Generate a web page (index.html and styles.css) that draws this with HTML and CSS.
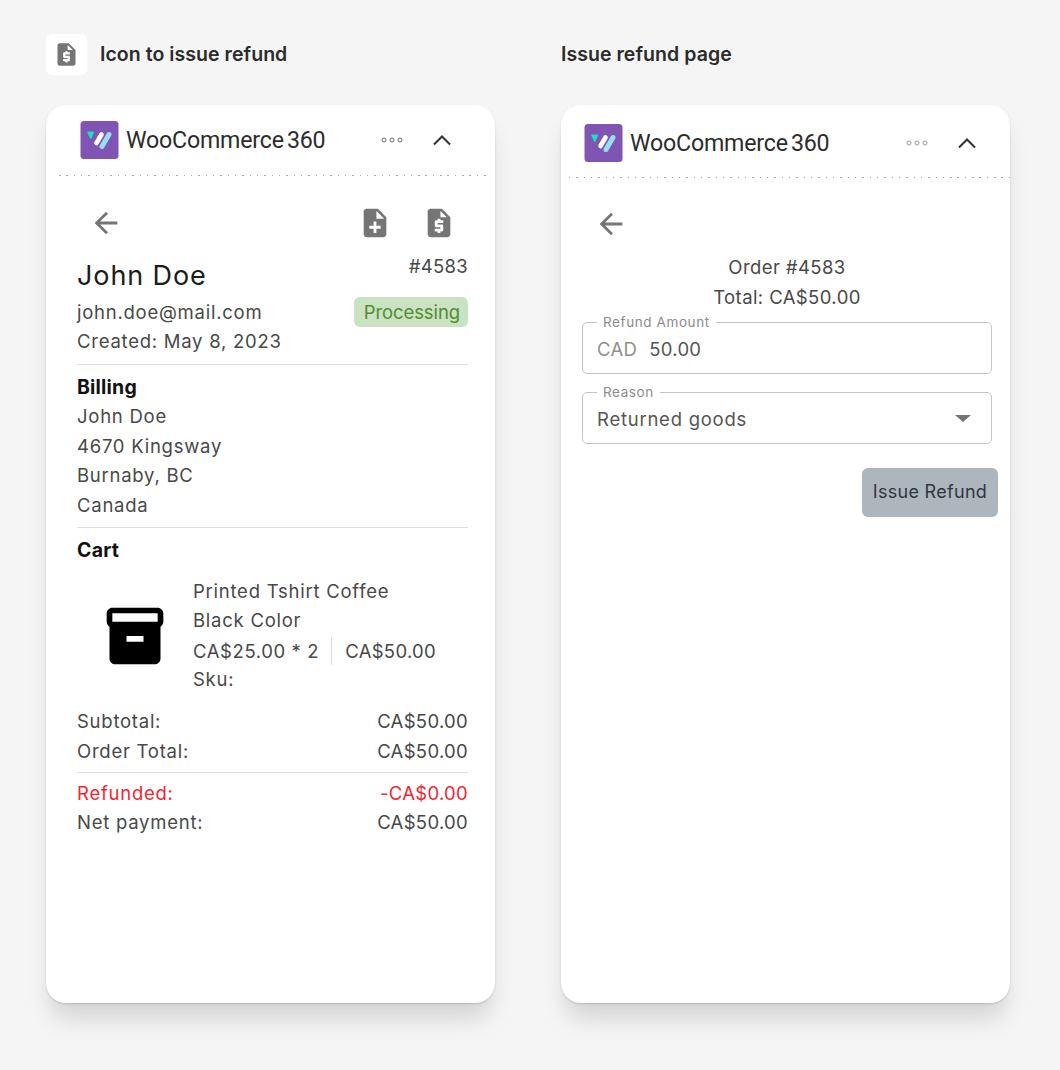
FILE: index.html
```html
<!DOCTYPE html>
<html lang="en">
<head>
<meta charset="utf-8">
<title>Issue refund</title>
<link rel="stylesheet" href="styles.css">
</head>
<body>
<svg class="defs" width="0" height="0" aria-hidden="true">
  <symbol id="quote" viewBox="0 0 24 24"><path d="M14 2H6c-1.1 0-1.99.9-1.99 2L4 20c0 1.1.89 2 1.99 2H18c1.1 0 2-.9 2-2V8l-6-6zm1 10h-4v1h3c.55 0 1 .45 1 1v3c0 .55-.45 1-1 1h-1v1h-2v-1H9v-2h4v-1h-3c-.55 0-1-.45-1-1v-3c0-.55.45-1 1-1h1V9h2v1h2v2zm-2-4V3.5L17.5 8H13z"/></symbol>
  <symbol id="note" viewBox="0 0 24 24"><path d="M14 2H6c-1.1 0-1.99.9-1.99 2L4 20c0 1.1.89 2 1.99 2H18c1.1 0 2-.9 2-2V8l-6-6zm2 14h-3v3h-2v-3H8v-2h3v-3h2v3h3v2zm-3-7V3.5L18.5 9H13z"/></symbol>
  <symbol id="back" viewBox="0 0 24 24"><path d="M20 11H7.83l5.59-5.59L12 4l-8 8 8 8 1.41-1.41L7.83 13H20v-2z"/></symbol>
  <symbol id="logo" viewBox="0 0 38 38"><rect width="38" height="38" rx="3.5" fill="#7f54b3"/><path d="M7.5 10.5h5c1 0 1.2.8.8 1.6L11 17.5c-.4.6-1 .5-1.3-.1L7 12c-.3-.8 0-1.5.5-1.5z" fill="#19e0c8"/><path d="M21 13.5L16 22" fill="none" stroke="#fff" stroke-width="4.6" stroke-linecap="round"/><path d="M28.5 13.5L21.5 25.5" fill="none" stroke="#9adcf5" stroke-width="5" stroke-linecap="round"/></symbol>
  <symbol id="dots" viewBox="0 0 22 6"><g fill="none" stroke="currentColor" stroke-width="1"><circle cx="3" cy="3" r="2"/><circle cx="11" cy="3" r="2"/><circle cx="19" cy="3" r="2"/></g></symbol>
  <symbol id="chev" viewBox="0 0 20 12"><path d="M2 10.5L10 2.5l8 8" fill="none" stroke="currentColor" stroke-width="2"/></symbol>
  <symbol id="box" viewBox="0 0 24 24"><path d="M20 2H4c-1 0-2 .9-2 2v3.01c0 .72.43 1.34 1 1.69V20c0 1.1 1.1 2 2 2h14c.9 0 2-.9 2-2V8.7c.57-.35 1-.97 1-1.69V4c0-1.1-1-2-2-2zm-5 12H9v-2h6v2zm5-7H4V4l16-.02V7z"/></symbol>
</svg>
<main class="page">
  <section class="col">
    <div class="caption">
      <span class="tile"><svg class="tile-icon"><use href="#quote"/></svg></span>
      <h2>Icon to issue refund</h2>
    </div>
    <article class="card">
      <header class="bar bar-a">
        <svg class="logo"><use href="#logo"/></svg>
        <span class="brand">WooCommerce 360</span>
        <svg class="dots"><use href="#dots"/></svg>
        <svg class="chev"><use href="#chev"/></svg>
      </header>
      <div class="dotted dotted-a"></div>
      <div class="body">
        <div class="tools">
          <svg class="ico back"><use href="#back"/></svg>
          <svg class="ico"><use href="#note"/></svg>
          <svg class="ico"><use href="#quote"/></svg>
        </div>
        <div class="who">
          <div class="name">John Doe</div>
          <div class="num">#4583</div>
        </div>
        <div class="row">
          <span>john.doe@mail.com</span>
          <span class="badge">Processing</span>
        </div>
        <div class="line">Created: May 8, 2023</div>
        <hr class="rule">
        <h3>Billing</h3>
        <div class="line">John Doe</div>
        <div class="line">4670 Kingsway</div>
        <div class="line">Burnaby, BC</div>
        <div class="line">Canada</div>
        <hr class="rule rule-b">
        <h3>Cart</h3>
        <div class="item">
          <svg class="box"><use href="#box"/></svg>
          <div class="info">
            <div class="line">Printed Tshirt Coffee</div>
            <div class="line">Black Color</div>
            <div class="prices"><span class="unit">CA$25.00 * 2</span><span class="sum">CA$50.00</span></div>
            <div class="line">Sku:</div>
          </div>
        </div>
        <div class="row sub"><span>Subtotal:</span><span class="money">CA$50.00</span></div>
        <div class="row"><span>Order Total:</span><span class="money">CA$50.00</span></div>
        <hr class="rule rule-c">
        <div class="row red"><span>Refunded:</span><span class="money">-CA$0.00</span></div>
        <div class="row"><span>Net payment:</span><span class="money">CA$50.00</span></div>
      </div>
    </article>
  </section>

  <section class="col">
    <div class="caption">
      <h2>Issue refund page</h2>
    </div>
    <article class="card">
      <header class="bar bar-b">
        <svg class="logo"><use href="#logo"/></svg>
        <span class="brand">WooCommerce 360</span>
        <svg class="dots dim"><use href="#dots"/></svg>
        <svg class="chev"><use href="#chev"/></svg>
      </header>
      <div class="dotted dotted-b"></div>
      <div class="body body-b">
        <div class="tools"><svg class="ico back"><use href="#back"/></svg></div>
        <div class="center first">Order #4583</div>
        <div class="center">Total: CA$50.00</div>
        <fieldset class="field">
          <legend>Refund Amount</legend>
          <span class="prefix">CAD</span><span class="val">50.00</span>
        </fieldset>
        <fieldset class="field">
          <legend>Reason</legend>
          <span class="val sel">Returned goods</span><span class="caret"></span>
        </fieldset>
        <div class="actions"><button class="btn" type="button">Issue Refund</button></div>
      </div>
    </article>
  </section>
</main>
</body>
</html>
```
FILE: styles.css
```css
* { box-sizing: border-box; }
html, body { margin: 0; height: 100%; }
body {
  background: #f5f5f5;
  font-family: Inter, "Open Sans", sans-serif;
  color: #484848;
  font-size: 18.5px;
  letter-spacing: .75px;
  overflow: hidden;
}
.defs { position: absolute; }
.page {
  display: grid;
  grid-template-columns: 449px 449px;
  column-gap: 66px;
  padding: 34px 0 0 46px;
}
.col { display: flex; flex-direction: column; }
.caption { display: flex; align-items: center; gap: 13px; height: 41px; margin-bottom: 30px; }
.caption h2 { margin: 0 0 2px; font-size: 19.5px; font-weight: 600; color: #2b2b2b; letter-spacing: .05px; }
.tile { width: 41px; height: 41px; background: #fff; border-radius: 6px; display: flex; align-items: center; justify-content: center; }
.tile-icon { width: 27px; height: 27px; fill: #757575; }
.card {
  height: 898px;
  background: #fff;
  border-radius: 20px;
  box-shadow: 0 1px 2px rgba(0,0,0,.15), 0 20px 25px -5px rgba(0,0,0,.14);
  overflow: hidden;
}
.bar { display: flex; align-items: center; height: 70px; }
.bar-a { padding: 0 43px 0 34px; }
.bar-b { padding: 3px 33px 0 23px; height: 72px; }
.logo { width: 39px; height: 38px; flex: none; }
.brand { font-family: Roboto, sans-serif; font-size: 23.2px; color: #2c2c2c; margin-left: 7px; margin-right: auto; letter-spacing: -.2px; word-spacing: -2.5px; }
.dots { width: 22px; height: 6px; color: #666; flex: none; }
.dots.dim { color: #999; }
.chev { width: 20px; height: 12px; color: #333; margin-left: 29px; flex: none; }
.bar-b .chev { margin-left: 29px; }
.dotted { height: 1px; background: repeating-linear-gradient(to right, #a9a6b6 0 1.5px, transparent 1.5px 7.33px); }
.dotted-a { margin: 0 8px 0 13px; }
.dotted-b { margin: 0 0 0 8px; }
.body { padding: 0 27px 0 31px; }
.body-b { padding: 0 12px 0 21px; }
.tools { display: flex; align-items: center; gap: 30px; height: 34px; margin-top: 30px; }
.body-b .tools { margin-top: 29px; }
.ico { width: 34px; height: 34px; fill: #757575; flex: none; }
.back { margin: 0 auto 0 12px; }
.tools .ico:last-child:not(.back) { margin-right: 12px; }
.who { display: flex; justify-content: space-between; align-items: flex-start; height: 43px; margin-top: 14px; }
.name { font-size: 27px; color: #1c1c1c; line-height: 36px; margin-top: 4px; letter-spacing: .9px; }
.num { line-height: 24px; letter-spacing: .3px; }
.line { line-height: 29.6px; height: 29.6px; white-space: nowrap; }
.row { display: flex; justify-content: space-between; align-items: center; height: 29.6px; }
.money { letter-spacing: .3px; }
.badge { background: #c8e2c3; color: #558b2f; border-radius: 6px; height: 30px; line-height: 30px; padding: 0 8px 0 10px; letter-spacing: -.1px; }
.rule { border: 0; height: 1px; background: #dedede; margin: 8px 0 8px; }
.rule-b { margin: 6px 0 8px; }
.rule-c { margin: 6px 0 5px; }
h3 { margin: 0; font-size: 19.5px; font-weight: 700; color: #111; line-height: 29px; letter-spacing: .2px; }
.item { display: flex; align-items: center; margin-top: 12px; }
.box { width: 68px; height: 68px; fill: #000; margin-left: 24px; flex: none; }
.info { margin-left: 24px; }
.prices { display: flex; align-items: center; height: 29.6px; }
.unit { padding-right: 12px; height: 28px; line-height: 28px; border-right: 1px solid #ddd; letter-spacing: .6px; }
.sum { padding-left: 13px; letter-spacing: .3px; }
.sub { margin-top: 11px; }
.sub + .row { margin-top: .6px; }
.red { color: #f8232f; }
.center { text-align: center; line-height: 30px; width: 410px; letter-spacing: .4px; }
.first { margin-top: 11px; }
.field { width: 410px; height: 60px; margin: 0; padding: 0 14px 6px; border: 1px solid #c4c4c4; border-radius: 5px; display: flex; align-items: center; }
.field + .field { margin-top: 10px; }
.center + .field { margin-top: 2px; }
legend { font-size: 13.5px; color: #8c8c8c; padding: 0 6px; line-height: 16px; letter-spacing: .6px; }
.prefix { color: #8f8f8f; margin-right: 12px; letter-spacing: .3px; }
.val { color: #555; letter-spacing: .3px; }
.sel { flex: 1; letter-spacing: .75px; }
.caret { width: 0; height: 0; border-left: 8px solid transparent; border-right: 8px solid transparent; border-top: 7px solid #757575; margin-right: 6px; }
.actions { display: flex; justify-content: flex-end; margin-top: 24px; }
.btn { width: 136px; height: 49px; background: #aeb6bd; border: 0; border-radius: 6px; font: inherit; font-size: 18px; color: #2f3640; padding: 0 0 3px; letter-spacing: .3px; }
```
